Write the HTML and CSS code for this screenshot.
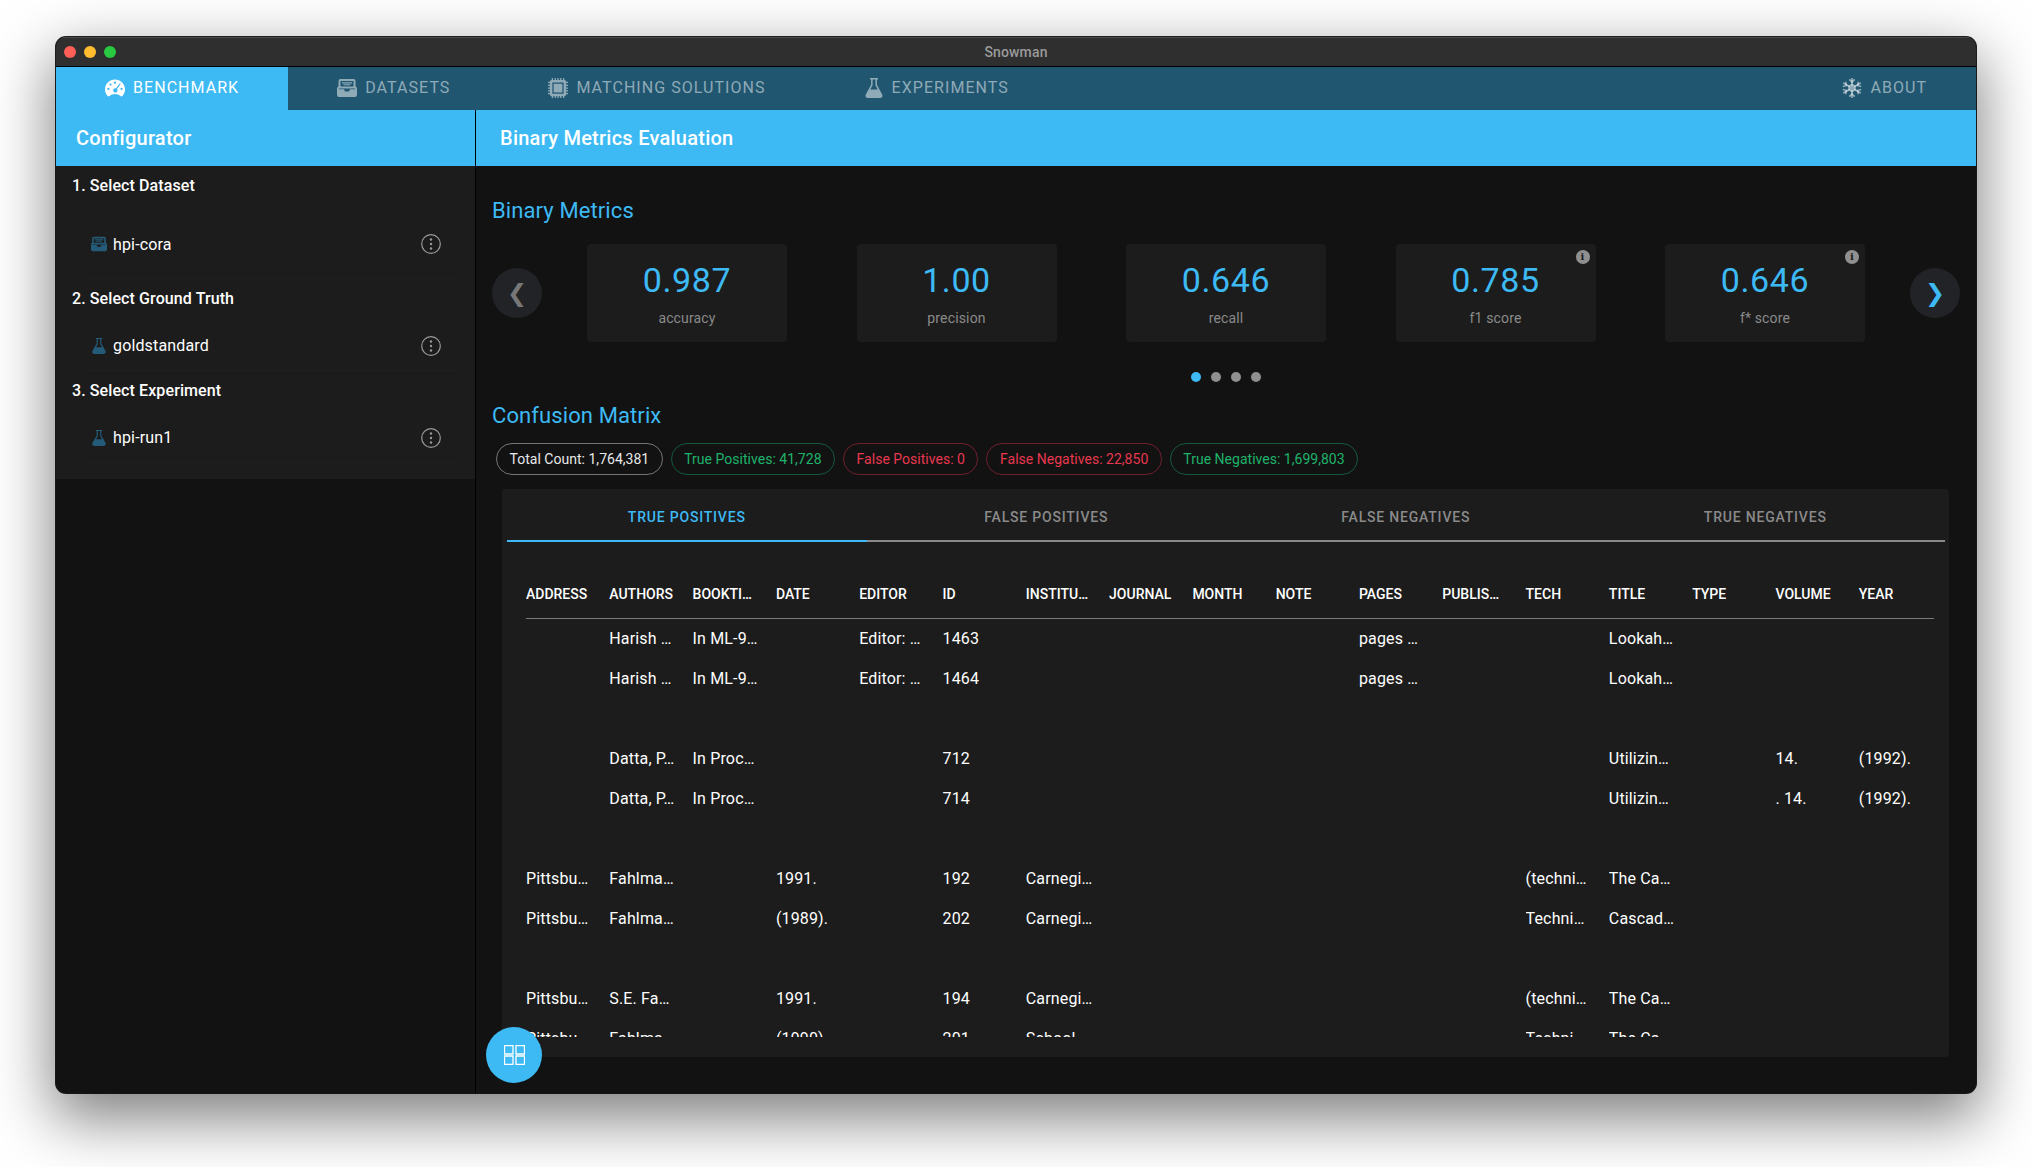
FILE: index.html
```html
<!DOCTYPE html>
<html lang="en">
<head>
    <meta charset="UTF-8">
    <title>Snowman</title>
    <link rel="stylesheet" href="styles.css">
</head>
<body>
    <svg class="iconDefs" width="0" height="0">
        <symbol id="iconGauge" viewBox="0 0 21 18">
            <path fill-rule="evenodd" d="M10.5 0C4.7 0 0 4.6 0 10.4c0 2.8 1 5.2 2.7 7 .5.6 1.4.6 2 .1 1.5-1.3 3.5-2.1 5.8-2.1s4.3.8 5.8 2.1c.6.5 1.5.5 2-.1 1.700-1.800 2.700-4.200 2.700-7C21 4.600 16.300 0 10.500 0zM10.500 2.300a1.200 1.200 0 1 1 0 2.400 1.200 1.200 0 0 1 0-2.400zM5.800 4.200a1.200 1.200 0 1 1 0 2.400 1.200 1.200 0 0 1 0-2.400zM3.600 8.800a1.200 1.200 0 1 1 0 2.400 1.200 1.200 0 0 1 0-2.400zM17.400 8.800a1.200 1.200 0 1 1 0 2.400 1.200 1.200 0 0 1 0-2.400zM15.600 3.900l1 .7-3.900 5.500a2.300 2.300 0 1 1-1.100-.8z"/>
        </symbol>
        <symbol id="iconTray" viewBox="0 0 20 18">
            <path fill-rule="evenodd" d="M3.500 0h13A2 2 0 0 1 18.500 2v5l1.500 2v7a2 2 0 0 1-2 2H2a2 2 0 0 1-2-2V9l1.500-2V2a2 2 0 0 1 2-2zM3.500 2v5.500H16.500V2zM5 3.200h10v1.300H5zM6.500 5.300h7v1H6.500zM1.800 9.500v.8H7l1 2.200h4l1-2.200h5.200v-.8z"/>
        </symbol>
        <symbol id="iconChip" viewBox="2 2 16 16">
            <path fill-rule="evenodd" d="M5 2h1v1.500h1.300V2h1v1.500h1.200V2h1v1.500h1.200V2h1v1.500H14V2h1v1.500A1.500 1.500 0 0 1 16.500 5H18v1h-1.500v1.300H18v1h-1.500v1.200H18v1h-1.500v1.200H18v1h-1.500V14H18v1h-1.500a1.500 1.500 0 0 1-1.500 1.500V18h-1v-1.500h-1.300V18h-1v-1.500h-1.200V18h-1v-1.500H8.300V18h-1v-1.500H6V18H5v-1.500A1.500 1.500 0 0 1 3.500 15H2v-1h1.500v-1.300H2v-1h1.500v-1.200H2v-1h1.500V8.300H2v-1h1.500V6H2V5h1.500A1.500 1.500 0 0 1 5 3.500zM5.500 5.500v9h9v-9z"/>
            <rect x="6.500" y="6.500" width="7" height="7" rx=".6"/>
        </symbol>
        <symbol id="iconFlask" viewBox="0 0 18 20">
            <path fill-rule="evenodd" d="M5 0h8v1.400h-1.100v5.400l5.300 9.600c.8 1.600-.2 3.600-2.100 3.600H2.900C1 20 0 18 .8 16.400l5.300-9.600V1.400H5zM7.600 1.400v5.800L5.300 11.500h7.400l-2.300-4.300V1.400z"/>
        </symbol>
        <symbol id="iconFlake" viewBox="0 0 20 20">
            <g fill="none" stroke="currentColor" stroke-width="1.700">
                <path d="M10 0v20M1.300 5l17.400 10M18.700 5L1.300 15"/>
                <path d="M7.300 1.300L10 4l2.700-2.700M7.300 18.700L10 16l2.700 2.700"/>
                <path d="M.8 8.500L4.500 7.500 3.500 3.800M19.200 11.500l-3.700 1 1 3.700M19.200 8.500l-3.700-1 1-3.700M.8 11.500l3.700 1-1 3.700"/>
                <path d="M10 6.500l3 1.750v3.500l-3 1.750-3-1.750v-3.500z"/>
            </g>
        </symbol>
        <symbol id="iconMore" viewBox="0 0 20 20">
            <circle cx="10" cy="10" r="9.300" fill="none" stroke="currentColor" stroke-width="1.200"/>
            <circle cx="10" cy="5.500" r="1.200"/>
            <circle cx="10" cy="10" r="1.200"/>
            <circle cx="10" cy="14.500" r="1.200"/>
        </symbol>
    </svg>

    <div class="appWindow">
        <div class="titleBar">
            <span class="light lightRed"></span>
            <span class="light lightYellow"></span>
            <span class="light lightGreen"></span>
            <span class="titleText">Snowman</span>
        </div>

        <nav class="navBar">
            <a class="navTab navActive"><svg class="navIcon"><use href="#iconGauge"/></svg>Benchmark</a>
            <a class="navTab"><svg class="navIcon"><use href="#iconTray"/></svg>Datasets</a>
            <a class="navTab"><svg class="navIcon"><use href="#iconChip"/></svg>Matching Solutions</a>
            <a class="navTab"><svg class="navIcon"><use href="#iconFlask"/></svg>Experiments</a>
            <a class="navTab navRight"><svg class="navIcon"><use href="#iconFlake"/></svg>About</a>
        </nav>

        <div class="appBody">
            <aside class="sidebar">
                <div class="paneHeader sidePad">Configurator</div>
                <div class="configPanel">
                    <div class="configTitle firstTitle">1. Select Dataset</div>
                    <div class="configItem itemTall">
                        <svg class="itemIcon"><use href="#iconTray"/></svg>
                        <span class="itemName">hpi-cora</span>
                        <svg class="moreIcon"><use href="#iconMore"/></svg>
                    </div>
                    <div class="configTitle">2. Select Ground Truth</div>
                    <div class="configItem">
                        <svg class="itemIcon"><use href="#iconFlask"/></svg>
                        <span class="itemName">goldstandard</span>
                        <svg class="moreIcon"><use href="#iconMore"/></svg>
                    </div>
                    <div class="configTitle">3. Select Experiment</div>
                    <div class="configItem">
                        <svg class="itemIcon"><use href="#iconFlask"/></svg>
                        <span class="itemName">hpi-run1</span>
                        <svg class="moreIcon"><use href="#iconMore"/></svg>
                    </div>
                </div>
            </aside>

            <main class="mainPane">
                <div class="paneHeader mainPad">Binary Metrics Evaluation</div>
                <div class="mainContent">
                    <h2 class="sectionTitle metricsTitle">Binary Metrics</h2>
                    <div class="carousel">
                        <button class="roundBtn btnOff">&#10094;</button>
                        <div class="metricCards">
                            <div class="metricCard"><div class="metricValue">0.987</div><div class="metricLabel">accuracy</div></div>
                            <div class="metricCard"><div class="metricValue">1.00</div><div class="metricLabel">precision</div></div>
                            <div class="metricCard"><div class="metricValue">0.646</div><div class="metricLabel">recall</div></div>
                            <div class="metricCard"><span class="infoBadge">i</span><div class="metricValue">0.785</div><div class="metricLabel">f1 score</div></div>
                            <div class="metricCard"><span class="infoBadge">i</span><div class="metricValue">0.646</div><div class="metricLabel">f* score</div></div>
                        </div>
                        <button class="roundBtn btnOn">&#10095;</button>
                    </div>
                    <div class="dots">
                        <span class="dot dotActive"></span>
                        <span class="dot"></span>
                        <span class="dot"></span>
                        <span class="dot"></span>
                    </div>

                    <h2 class="sectionTitle matrixTitle">Confusion Matrix</h2>
                    <div class="chips">
                        <span class="chip chipGrey">Total Count: 1,764,381</span>
                        <span class="chip chipGreen">True Positives: 41,728</span>
                        <span class="chip chipRed">False Positives: 0</span>
                        <span class="chip chipRed">False Negatives: 22,850</span>
                        <span class="chip chipGreen">True Negatives: 1,699,803</span>
                    </div>

                    <div class="matrixCard">
                        <div class="matrixTabs">
                            <div class="matrixTab matrixActive">True Positives</div>
                            <div class="matrixTab">False Positives</div>
                            <div class="matrixTab">False Negatives</div>
                            <div class="matrixTab">True Negatives</div>
                        </div>
                        <div class="tableWrap">
                            <table class="dataTable">
                                <thead>
                                    <tr><th>address</th><th>authors</th><th>bookti…</th><th>date</th><th>editor</th><th>id</th><th>institu…</th><th>journal</th><th>month</th><th>note</th><th>pages</th><th>publis…</th><th>tech</th><th>title</th><th>type</th><th>volume</th><th>year</th></tr>
                                </thead>
                                <tbody>
                                    <tr><td></td><td>Harish …</td><td>In ML-9…</td><td></td><td>Editor: …</td><td>1463</td><td></td><td></td><td></td><td></td><td>pages …</td><td></td><td></td><td>Lookah…</td><td></td><td></td><td></td></tr>
                                    <tr><td></td><td>Harish …</td><td>In ML-9…</td><td></td><td>Editor: …</td><td>1464</td><td></td><td></td><td></td><td></td><td>pages …</td><td></td><td></td><td>Lookah…</td><td></td><td></td><td></td></tr>
                                    <tr><td colspan="17"></td></tr>
                                    <tr><td></td><td>Datta, P…</td><td>In Proc…</td><td></td><td></td><td>712</td><td></td><td></td><td></td><td></td><td></td><td></td><td></td><td>Utilizin…</td><td></td><td>14.</td><td>(1992).</td></tr>
                                    <tr><td></td><td>Datta, P…</td><td>In Proc…</td><td></td><td></td><td>714</td><td></td><td></td><td></td><td></td><td></td><td></td><td></td><td>Utilizin…</td><td></td><td>. 14.</td><td>(1992).</td></tr>
                                    <tr><td colspan="17"></td></tr>
                                    <tr><td>Pittsbu…</td><td>Fahlma…</td><td></td><td>1991.</td><td></td><td>192</td><td>Carnegi…</td><td></td><td></td><td></td><td></td><td></td><td>(techni…</td><td>The Ca…</td><td></td><td></td><td></td></tr>
                                    <tr><td>Pittsbu…</td><td>Fahlma…</td><td></td><td>(1989).</td><td></td><td>202</td><td>Carnegi…</td><td></td><td></td><td></td><td></td><td></td><td>Techni…</td><td>Cascad…</td><td></td><td></td><td></td></tr>
                                    <tr><td colspan="17"></td></tr>
                                    <tr><td>Pittsbu…</td><td>S.E. Fa…</td><td></td><td>1991.</td><td></td><td>194</td><td>Carnegi…</td><td></td><td></td><td></td><td></td><td></td><td>(techni…</td><td>The Ca…</td><td></td><td></td><td></td></tr>
                                    <tr><td>Pittsbu…</td><td>Fahlma…</td><td></td><td>(1990).</td><td></td><td>201</td><td>School…</td><td></td><td></td><td></td><td></td><td></td><td>Techni…</td><td>The Ca…</td><td></td><td></td><td></td></tr>
                                </tbody>
                            </table>
                        </div>
                    </div>
                </div>
                <button class="fabButton">
                    <svg class="fabIcon" viewBox="0 0 21 20"><path d="M.5.500h8.500v8.500H.5zM12 .5h8.500v8.500H12zM.5 11h8.500v8.500H.5zM12 11h8.500v8.500H12z"/></svg>
                </button>
            </main>
        </div>
    </div>
</body>
</html>
```

FILE: styles.css
```css
* {
    box-sizing: border-box;
}

html, body {
    height: 100%;
}

body {
    margin: 0;
    padding: 37px 56px 74px;
    background: #fff;
    font-family: Roboto, "Liberation Sans", sans-serif;
    font-size: 16px;
    letter-spacing: 0.15px;
    color: #fff;
    overflow: hidden;
}

.iconDefs {
    position: absolute;
}

.appWindow {
    display: flex;
    flex-direction: column;
    height: 1056px;
    background: #121212;
    border-radius: 10px;
    overflow: hidden;
    box-shadow: 0 22px 60px 4px rgba(0, 0, 0, 0.5), 0 0 0 1px #222;
}

.titleBar {
    position: relative;
    display: flex;
    align-items: center;
    gap: 8px;
    height: 30px;
    padding: 0 0 1px 8px;
    background: #2f2f2f;
    border-top: 1px solid #4a4a4a;
    border-bottom: 1px solid #000;
}

.light {
    width: 12px;
    height: 12px;
    border-radius: 50%;
}

.lightRed { background: #ff5f57; }
.lightYellow { background: #febc2e; }
.lightGreen { background: #28c840; }

.titleText {
    position: absolute;
    left: 0;
    right: 0;
    text-align: center;
    font-size: 14px;
    font-weight: 500;
    color: #9a9a9a;
}

.navBar {
    display: flex;
    height: 43px;
    background: #205670;
}

.navTab {
    display: flex;
    align-items: center;
    gap: 8px;
    padding: 0 49px 2px;
    font-size: 16px;
    letter-spacing: 1.05px;
    text-transform: uppercase;
    color: rgba(255, 255, 255, 0.5);
}

.navActive {
    background: #3dbaf4;
    color: #fff;
}

.navRight {
    margin-left: auto;
}

.navIcon {
    width: 20px;
    height: 20px;
    fill: currentColor;
    color: inherit;
}

.appBody {
    flex: 1;
    display: flex;
    min-height: 0;
}

.sidebar {
    width: 420px;
    border-right: 1px solid #000;
}

.paneHeader {
    display: flex;
    align-items: center;
    height: 56px;
    background: #3dbaf4;
    font-size: 20px;
    font-weight: 500;
    letter-spacing: 0.25px;
}

.sidePad {
    padding-left: 20px;
}

.mainPad {
    padding-left: 24px;
}

.configPanel {
    height: 313px;
    padding: 0 16px;
    background: #1c1c1c;
}

.configTitle {
    height: 39px;
    line-height: 39px;
    font-weight: 500;
    letter-spacing: 0.1px;
}

.firstTitle {
    height: 38px;
    line-height: 39px;
}

.configItem {
    display: flex;
    align-items: center;
    height: 50px;
    margin: 3px 0 0 15px;
    padding: 0 18px 0 4px;
    border-bottom: 1px solid #202020;
}

.itemTall {
    height: 69px;
    margin-top: 6px;
}

.itemIcon {
    width: 16px;
    height: 16px;
    fill: #245b78;
    margin-right: 6px;
}

.itemName {
    flex: 1;
}

.moreIcon {
    width: 20px;
    height: 20px;
    fill: #9a9a9a;
    color: #9a9a9a;
}

.mainPane {
    position: relative;
    flex: 1;
    min-width: 0;
}

.mainContent {
    padding: 31px 27px 0 16px;
}

.sectionTitle {
    margin: 0;
    height: 28px;
    line-height: 28px;
    font-size: 22px;
    font-weight: 400;
    letter-spacing: 0.1px;
    color: #3dbaf4;
}

.carousel {
    display: flex;
    align-items: center;
    justify-content: space-between;
    width: 1468px;
    margin-top: 19px;
}

.roundBtn {
    width: 50px;
    height: 50px;
    padding: 0;
    border: 0;
    border-radius: 50%;
    background: #212326;
    font-family: "DejaVu Sans", sans-serif;
    font-size: 24px;
}

.btnOff {
    color: #777;
}

.btnOn {
    color: #3dbaf4;
}

.metricCards {
    display: flex;
    justify-content: space-between;
    width: 1278px;
}

.metricCard {
    position: relative;
    width: 200px;
    height: 98px;
    padding-top: 15px;
    border-radius: 4px;
    background: #1c1c1c;
    text-align: center;
}

.metricValue {
    height: 42px;
    line-height: 42px;
    font-size: 34px;
    letter-spacing: 0.6px;
    color: #3dbaf4;
}

.metricLabel {
    margin-top: 7px;
    font-size: 14px;
    line-height: 20px;
    color: #8a8a8a;
}

.infoBadge {
    position: absolute;
    top: 6px;
    right: 6px;
    width: 14px;
    height: 14px;
    border-radius: 50%;
    background: #8f8f8f;
    color: #1c1c1c;
    font-family: "DejaVu Serif", serif;
    font-size: 10px;
    font-weight: 700;
    line-height: 14px;
    text-align: center;
}

.dots {
    display: flex;
    justify-content: center;
    gap: 10px;
    width: 1468px;
    margin-top: 30px;
}

.dot {
    width: 10px;
    height: 10px;
    border-radius: 50%;
    background: #8f8f8f;
}

.dotActive {
    background: #3dbaf4;
}

.matrixTitle {
    margin-top: 20px;
}

.chips {
    display: flex;
    gap: 8px;
    margin: 13px 0 14px 4px;
}

.chip {
    height: 32px;
    line-height: 31px;
    padding: 0 12.5px;
    border: 1px solid;
    border-radius: 16px;
    font-size: 14px;
    letter-spacing: 0.02px;
}

.chipGrey {
    border-color: #757575;
    color: #e8e8e8;
}

.chipGreen {
    border-color: #14593a;
    color: #1fb26b;
}

.chipRed {
    border-color: #6e1f2c;
    color: #e8384f;
}

.matrixCard {
    height: 568px;
    margin-left: 10px;
    padding: 3px 4px 0 5px;
    border-radius: 4px;
    background: #1c1c1c;
}

.matrixTabs {
    display: flex;
}

.matrixTab {
    flex: 1;
    height: 50px;
    line-height: 50px;
    border-bottom: 2px solid #8a8a8a;
    text-align: center;
    font-size: 14px;
    font-weight: 500;
    letter-spacing: 0.8px;
    text-transform: uppercase;
    color: #8a8a8a;
}

.matrixActive {
    border-bottom-color: #3dbaf4;
    color: #3dbaf4;
}

.tableWrap {
    height: 467px;
    margin: 28px 0 0 19px;
    overflow: hidden;
}

.dataTable {
    width: 1408px;
    table-layout: fixed;
    border-collapse: collapse;
}

.dataTable th {
    width: 83.3px;
    height: 48px;
    padding: 0;
    border-bottom: 1px solid #7a7a7a;
    text-align: left;
    font-size: 14px;
    font-weight: 500;
    letter-spacing: 0;
    text-transform: uppercase;
    white-space: nowrap;
}

.dataTable th:last-child {
    width: 75px;
}

.dataTable td {
    height: 40px;
    padding: 0;
    white-space: nowrap;
    overflow: hidden;
}

.fabButton {
    position: absolute;
    left: 10px;
    bottom: 10px;
    display: flex;
    align-items: center;
    justify-content: center;
    width: 56px;
    height: 56px;
    padding: 0;
    border: 0;
    border-radius: 50%;
    background: #3dbaf4;
}

.fabIcon {
    width: 21px;
    height: 20px;
    fill: none;
    stroke: #fff;
    stroke-width: 1.300;
}
```
